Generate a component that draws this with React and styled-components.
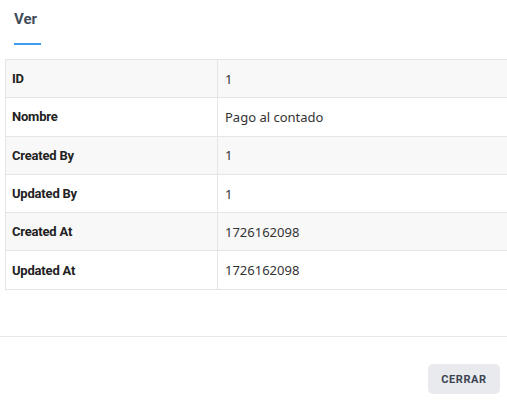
import styled, { createGlobalStyle } from 'styled-components';

const GlobalStyle = createGlobalStyle`
  body {
    margin: 0;
    background: #fff;
    font-family: "Noto Sans", sans-serif;
    overflow: hidden;
  }
`;

const Page = styled.div`
  width: 507px;
  height: 403px;
  display: flex;
  flex-direction: column;
  overflow: hidden;
`;

const Tabs = styled.div`
  display: flex;
  padding: 0 14px;
  height: 46px;
`;

const Tab = styled.div`
  display: flex;
  flex-direction: column;
  justify-content: space-between;
  padding-top: 10px;
  font-family: "Roboto", sans-serif;
  font-weight: 700;
  font-size: 15px;
  color: #434d5a;

  &::after {
    content: '';
    display: block;
    height: 2px;
    width: 27px;
    margin-bottom: 1px;
    background: #3c9cf2;
  }
`;

const Body = styled.div`
  padding: 13px 0 0 5px;
  height: 277px;
  border-bottom: 1px solid #e6e8ec;
`;

const Table = styled.table`
  width: 540px;
  border-collapse: collapse;
  border: 1px solid #e5e5e5;
`;

const Row = styled.tr`
  background: ${p => (p.$striped ? '#f8f8f8' : '#fff')};
  height: 38.3px;
  border-bottom: 1px solid #e5e5e5;
`;

const Label = styled.th`
  width: 199px;
  text-align: left;
  padding: 0 6px;
  font-family: "Roboto", sans-serif;
  font-weight: 700;
  font-size: 13px;
  letter-spacing: -0.2px;
  color: #222;
  border-right: 1px solid #e5e5e5;
`;

const Value = styled.td`
  padding: 0 7px;
  font-size: 13px;
  color: #333;
`;

const Footer = styled.div`
  display: flex;
  justify-content: flex-end;
  padding: 27px 7px 0 0;
`;

const Button = styled.button`
  border: none;
  border-radius: 5px;
  background: #e8eaee;
  color: #3b4453;
  font-family: "Roboto", sans-serif;
  font-weight: 700;
  font-size: 11px;
  letter-spacing: 0.6px;
  height: 30px;
  width: 72px;
  padding: 0;
`;

const rows = [
  ['ID', '1'],
  ['Nombre', 'Pago al contado'],
  ['Created By', '1'],
  ['Updated By', '1'],
  ['Created At', '1726162098'],
  ['Updated At', '1726162098'],
];

export default function App() {
  return (
    <Page>
      <GlobalStyle />
      <Tabs>
        <Tab>Ver</Tab>
      </Tabs>
      <Body>
        <Table>
          <tbody>
            {rows.map(([label, value], i) => (
              <Row key={label} $striped={i % 2 === 0}>
                <Label>{label}</Label>
                <Value>{value}</Value>
              </Row>
            ))}
          </tbody>
        </Table>
      </Body>
      <Footer>
        <Button>CERRAR</Button>
      </Footer>
    </Page>
  );
}
